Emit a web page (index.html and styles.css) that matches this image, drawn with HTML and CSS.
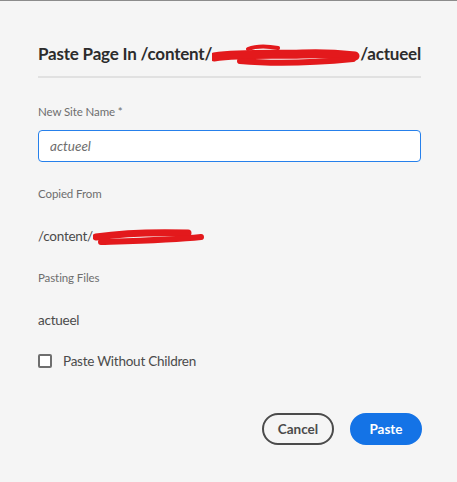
FILE: index.html
```html
<!DOCTYPE html>
<html lang="en">
<head>
<meta charset="utf-8">
<title>Paste Page</title>
<link rel="stylesheet" href="styles.css">
</head>
<body>
<div class="dialog">
  <h1 class="title">Paste Page In /content/<svg class="redact redact-title" width="148" height="26" viewBox="0 0 148 26"><path d="M2 14 C30 10 60 12 90 11 C110 10 125 11 143 13" stroke="#e3191c" stroke-width="9" fill="none" stroke-linecap="round"/><path d="M36 6 C46 2 56 3 66 5" stroke="#e3191c" stroke-width="4" fill="none" stroke-linecap="round"/><path d="M28 18 C60 21 100 20 141 16" stroke="#e3191c" stroke-width="6" fill="none" stroke-linecap="round"/></svg>/actueel</h1>
  <div class="divider"></div>

  <div class="field">
    <label class="label" for="name">New Site Name *</label>
    <input class="input" id="name" type="text" placeholder="actueel">
  </div>

  <div class="field">
    <div class="label">Copied From</div>
    <div class="value">/content/<svg class="redact redact-path" width="112" height="20" viewBox="0 0 112 20"><path d="M3 9 C30 5 60 4 95 5" stroke="#e3191c" stroke-width="7" fill="none" stroke-linecap="round"/><path d="M8 14 C40 13 80 12 108 9" stroke="#e3191c" stroke-width="6" fill="none" stroke-linecap="round"/></svg></div>
  </div>

  <div class="field">
    <div class="label">Pasting Files</div>
    <div class="value">actueel</div>
  </div>

  <label class="check">
    <span class="box"></span>
    <span class="check-text">Paste Without Children</span>
  </label>

  <div class="actions">
    <button class="btn btn-secondary">Cancel</button>
    <button class="btn btn-primary">Paste</button>
  </div>
</div>
</body>
</html>
```
FILE: styles.css
```css
html, body {
  margin: 0;
  padding: 0;
}
body {
  background: #f5f5f5;
  border-top: 1px solid #8c8c8c;
  font-family: Lato, "Open Sans", sans-serif;
  color: #4b4b4b;
  height: 481px;
  overflow: hidden;
}
.dialog {
  width: 383px;
  margin-left: 38px;
  padding-top: 41px;
}
.title {
  margin: 0;
  font-size: 17px;
  letter-spacing: -0.2px;
  line-height: 24px;
  height: 24px;
  font-weight: 700;
  color: #2c2c2c;
  white-space: nowrap;
}
.redact {
  vertical-align: middle;
  margin: -8px 0;
}
.divider {
  margin-top: 10px;
  height: 2px;
  background: #e1e1e1;
}
.field {
  display: flex;
  flex-direction: column;
}
.label {
  display: block;
  font-size: 11.5px;
  letter-spacing: -0.1px;
  line-height: 18px;
  color: #6e6e6e;
  margin-top: 25px;
}
.input {
  margin-top: 9px;
  height: 32px;
  box-sizing: border-box;
  border: 1px solid #2680eb;
  border-radius: 4px;
  background: #fff;
  padding: 0 11px;
  font-family: inherit;
  font-size: 13.5px;
  outline: none;
}
.input::placeholder {
  color: #6e6e6e;
  font-style: italic;
}
.field + .field .label {
  margin-top: 23px;
}
.value {
  margin-top: 23px;
  font-size: 13.5px;
  letter-spacing: -0.25px;
  line-height: 20px;
  height: 20px;
  color: #4b4b4b;
  white-space: nowrap;
}
.check {
  display: flex;
  align-items: center;
  gap: 11px;
  margin-top: 21px;
  height: 20px;
}
.box {
  width: 14px;
  height: 14px;
  box-sizing: border-box;
  border: 2px solid #6e6e6e;
  border-radius: 2px;
  background: #fff;
}
.check-text {
  font-size: 13.5px;
  letter-spacing: -0.25px;
  color: #4b4b4b;
}
.actions {
  display: flex;
  justify-content: flex-end;
  gap: 16px;
  margin-top: 42px;
  margin-right: -1px;
}
.btn {
  height: 32px;
  width: 72px;
  border-radius: 16px;
  font-family: inherit;
  font-size: 13.5px;
  font-weight: 700;
  padding: 0;
  box-sizing: border-box;
  cursor: pointer;
}
.btn-secondary {
  border: 2px solid #4b4b4b;
  background: transparent;
  color: #4b4b4b;
}
.btn-primary {
  border: 2px solid #1473e6;
  background: #1473e6;
  color: #fff;
}
```
